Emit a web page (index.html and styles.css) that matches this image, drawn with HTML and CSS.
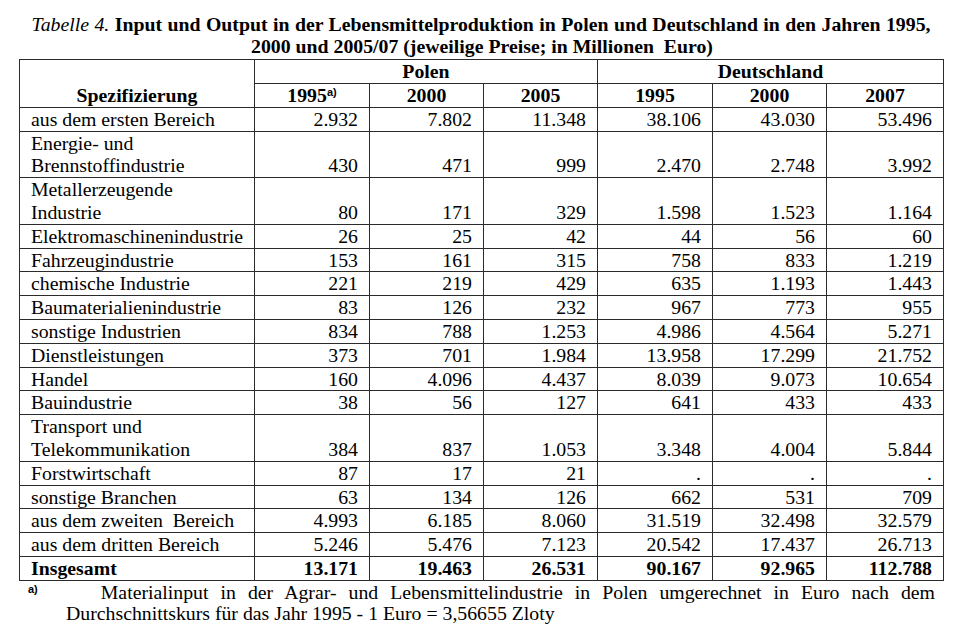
FILE: index.html
```html
<!DOCTYPE html>
<html lang="de">
<head>
<meta charset="utf-8">
<title>Tabelle 4</title>
<link rel="stylesheet" href="styles.css">
</head>
<body>
<div class="caption">
  <p class="cap-l1"><span class="cap-label">Tabelle 4.</span> <b>Input und Output in der Lebensmittelproduktion in Polen und Deutschland in den Jahren 1995,</b></p>
  <p class="cap-l2"><b>2000 und 2005/07 (jeweilige Preise; in Millionen&nbsp; Euro)</b></p>
</div>
<table class="data">
  <colgroup>
    <col class="c-spec">
    <col class="c-num"><col class="c-num2"><col class="c-num2">
    <col class="c-num"><col class="c-num2"><col class="c-last">
  </colgroup>
  <thead>
    <tr>
      <th rowspan="2" class="spec">Spezifizierung</th>
      <th colspan="3">Polen</th>
      <th colspan="3">Deutschland</th>
    </tr>
    <tr>
      <th>1995<sup class="fn">a)</sup></th>
      <th>2000</th>
      <th>2005</th>
      <th>1995</th>
      <th>2000</th>
      <th>2007</th>
    </tr>
  </thead>
  <tbody>
    <tr><td>aus dem ersten Bereich</td><td>2.932</td><td>7.802</td><td>11.348</td><td>38.106</td><td>43.030</td><td>53.496</td></tr>
    <tr><td>Energie- und<br>Brennstoffindustrie</td><td>430</td><td>471</td><td>999</td><td>2.470</td><td>2.748</td><td>3.992</td></tr>
    <tr><td>Metallerzeugende<br>Industrie</td><td>80</td><td>171</td><td>329</td><td>1.598</td><td>1.523</td><td>1.164</td></tr>
    <tr><td>Elektromaschinenindustrie</td><td>26</td><td>25</td><td>42</td><td>44</td><td>56</td><td>60</td></tr>
    <tr><td>Fahrzeugindustrie</td><td>153</td><td>161</td><td>315</td><td>758</td><td>833</td><td>1.219</td></tr>
    <tr><td>chemische Industrie</td><td>221</td><td>219</td><td>429</td><td>635</td><td>1.193</td><td>1.443</td></tr>
    <tr><td>Baumaterialienindustrie</td><td>83</td><td>126</td><td>232</td><td>967</td><td>773</td><td>955</td></tr>
    <tr><td>sonstige Industrien</td><td>834</td><td>788</td><td>1.253</td><td>4.986</td><td>4.564</td><td>5.271</td></tr>
    <tr><td>Dienstleistungen</td><td>373</td><td>701</td><td>1.984</td><td>13.958</td><td>17.299</td><td>21.752</td></tr>
    <tr><td>Handel</td><td>160</td><td>4.096</td><td>4.437</td><td>8.039</td><td>9.073</td><td>10.654</td></tr>
    <tr><td>Bauindustrie</td><td>38</td><td>56</td><td>127</td><td>641</td><td>433</td><td>433</td></tr>
    <tr><td>Transport und<br>Telekommunikation</td><td>384</td><td>837</td><td>1.053</td><td>3.348</td><td>4.004</td><td>5.844</td></tr>
    <tr><td>Forstwirtschaft</td><td>87</td><td>17</td><td>21</td><td>.</td><td>.</td><td>.</td></tr>
    <tr><td>sonstige Branchen</td><td>63</td><td>134</td><td>126</td><td>662</td><td>531</td><td>709</td></tr>
    <tr><td>aus dem zweiten&nbsp; Bereich</td><td>4.993</td><td>6.185</td><td>8.060</td><td>31.519</td><td>32.498</td><td>32.579</td></tr>
    <tr><td>aus dem dritten Bereich</td><td>5.246</td><td>5.476</td><td>7.123</td><td>20.542</td><td>17.437</td><td>26.713</td></tr>
    <tr class="total"><td>Insgesamt</td><td>13.171</td><td>19.463</td><td>26.531</td><td>90.167</td><td>92.965</td><td>112.788</td></tr>
  </tbody>
</table>
<div class="note">
  <p class="note-l1"><sup class="fn">a)</sup><span class="tab"></span>Materialinput in der Agrar- und Lebensmittelindustrie in Polen umgerechnet in Euro nach dem</p>
  <p class="note-l2">Durchschnittskurs für das Jahr 1995 - 1 Euro = 3,56655 Zloty</p>
</div>
</body>
</html>
```
FILE: styles.css
```css
html, body {
  margin: 0;
  padding: 0;
  background: #ffffff;
}

body {
  font-family: "Liberation Serif", "Times New Roman", serif;
  font-size: 19.8px;
  color: #000000;
  padding-top: 14px;
}

.caption p {
  margin: 0;
  line-height: 21.6px;
}

.caption .cap-l1 {
  width: 899px;
  margin: 0 auto;
  white-space: nowrap;
  text-align: justify;
  text-align-last: justify;
}

.cap-label {
  font-style: italic;
}

.caption .cap-l2 {
  text-align: center;
  padding-left: 2px;
}

.data {
  margin: 2px 0 0 19px;
  border-collapse: collapse;
  table-layout: fixed;
  width: 924px;
  line-height: 22.8px;
}

.c-spec { width: 235px; }
.c-num { width: 115px; }
.c-num2 { width: 114px; }
.c-last { width: 117px; }

.data th,
.data td {
  border: 1px solid #2b2b2b;
  padding: 0 11px;
  vertical-align: bottom;
}

.data th {
  font-weight: bold;
  text-align: center;
}

.data td {
  text-align: right;
}

.data td:first-child {
  text-align: left;
  padding-left: 11px;
  padding-right: 2px;
}

.data .total td {
  font-weight: bold;
}

.fn {
  font-family: "Liberation Sans", Arial, sans-serif;
  font-weight: bold;
  font-size: 11px;
  line-height: 0;
  vertical-align: 6px;
}

.note p {
  margin: 0;
  line-height: 21.6px;
}

.note .note-l1 {
  padding: 1px 27px 0 28px;
  white-space: nowrap;
  text-align: justify;
  text-align-last: justify;
}

.tab {
  display: inline-block;
  width: 63px;
}

.note .note-l2 {
  padding-left: 66px;
}
```
